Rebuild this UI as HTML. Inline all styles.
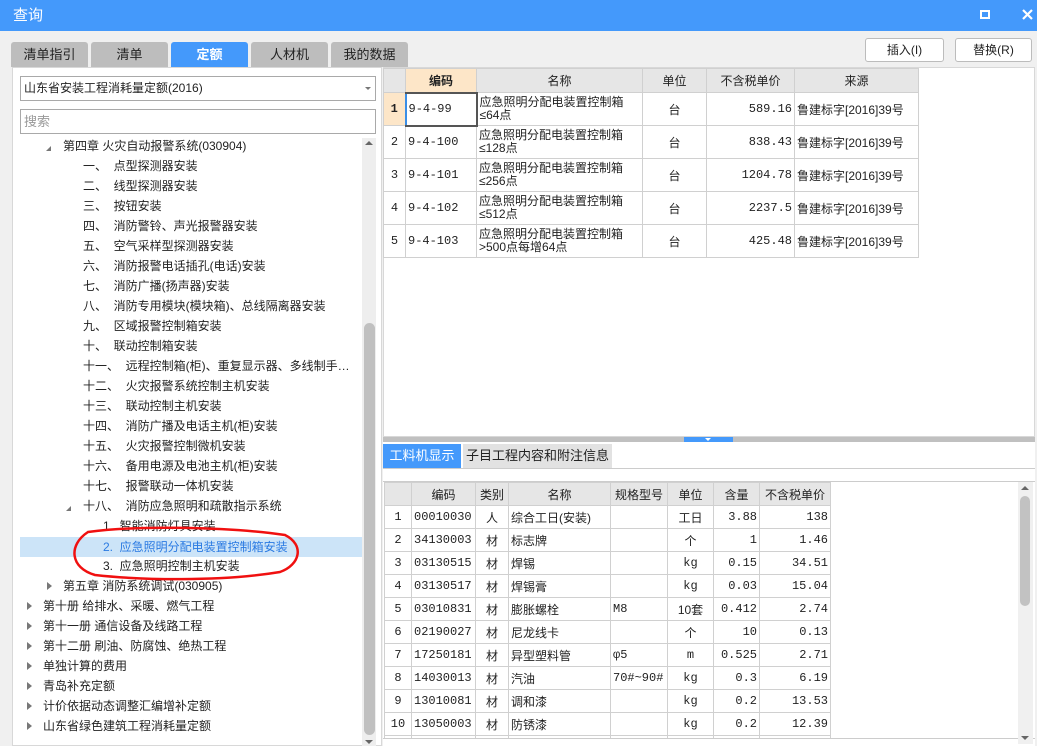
<!DOCTYPE html>
<html style="overflow:hidden;height:746px"><head><meta charset="utf-8"><style>
*{box-sizing:border-box;margin:0;padding:0}
body{width:1037px;height:746px;overflow:hidden;background:#f0f0f0;font-family:"Liberation Sans","Noto Sans CJK SC",sans-serif;font-size:12px;color:#222;position:relative}
.a{position:absolute}
.title{left:0;top:0;width:1037px;height:31px;background:#4499fb;color:#fff;font-size:15px;line-height:31px;padding-left:13px}
.tab{top:42px;height:25px;background:#bdbdbd;border-radius:3px 3px 0 0;text-align:center;line-height:25px;font-size:13px;color:#222}
.tab.on{background:#4499fb;color:#fff;font-weight:bold}
.btn{top:38px;height:24px;background:#fff;border:1px solid #bcbcbc;border-radius:3px;text-align:center;line-height:22px;font-size:12px}
.tree div{position:absolute;height:20px;line-height:20px;white-space:pre;font-size:12px}
.tree div.tri{height:0;width:0;line-height:0}
.tr{border-top:4px solid transparent;border-bottom:4px solid transparent;border-left:5px solid #777}
.td{border-left:5px solid transparent;border-bottom:5px solid #777}
table{border-collapse:collapse;position:absolute;table-layout:fixed}
td{border:1px solid #d0d0d0;font-size:12px;padding:0 2px;overflow:hidden;white-space:nowrap;font-family:"Liberation Mono","Noto Sans CJK SC",monospace}
.h td{background:#e6e6e6;text-align:center;font-family:"Liberation Sans","Noto Sans CJK SC",sans-serif}
.r{text-align:right}.c{text-align:center}
.cn{font-family:"Liberation Sans","Noto Sans CJK SC",sans-serif}
</style></head><body>
<div class="a title">查询</div>
<div class="a" style="left:980px;top:10px;width:10px;height:9px;border:2px solid #fff"></div>
<svg class="a" style="left:1022px;top:9px" width="11" height="11"><path d="M1 1L10 10M10 1L1 10" stroke="#fff" stroke-width="2.2"/></svg>

<div class="a tab" style="left:11px;width:77px">清单指引</div>
<div class="a tab" style="left:91px;width:77px">清单</div>
<div class="a tab on" style="left:171px;width:77px">定额</div>
<div class="a tab" style="left:251px;width:77px">人材机</div>
<div class="a tab" style="left:331px;width:77px">我的数据</div>
<div class="a btn" style="left:865px;width:79px">插入(I)</div>
<div class="a btn" style="left:955px;width:77px">替换(R)</div>

<!-- left panel -->
<div class="a" style="left:12px;top:67px;width:370px;height:679px;background:#fff;border:1px solid #d8d8d8"></div>
<div class="a" style="left:20px;top:76px;width:356px;height:25px;border:1px solid #a9a9a9;background:#fff;line-height:23px;padding-left:3px;font-size:12px">山东省安装工程消耗量定额(2016)</div>
<div class="a" style="left:365px;top:87px;border-left:3px solid transparent;border-right:3px solid transparent;border-top:3px solid #777"></div>
<div class="a" style="left:20px;top:109px;width:356px;height:25px;border:1px solid #a9a9a9;background:#fff;line-height:23px;padding-left:3px;color:#999;font-size:13px">搜索</div>
<div class="a" style="left:362px;top:138px;width:14px;height:608px;background:#eee"></div>
<div class="a" style="left:364px;top:323px;width:11px;height:412px;background:#c0c0c0;border-radius:6px"></div>
<div class="a" style="left:365px;top:141px;border-left:4px solid transparent;border-right:4px solid transparent;border-bottom:4px solid #666"></div>
<div class="a" style="left:365px;top:740px;border-left:4px solid transparent;border-right:4px solid transparent;border-top:4px solid #666"></div>
<div class="a" style="left:20px;top:537px;width:342px;height:20px;background:#cce4f8"></div>

<div class="tree">
<div class="tri td" style="left:46px;top:146px"></div>
<div style="left:63px;top:136px">第四章 火灾自动报警系统(030904)</div>
<div style="left:83px;top:156px">一、  点型探测器安装</div>
<div style="left:83px;top:176px">二、  线型探测器安装</div>
<div style="left:83px;top:196px">三、  按钮安装</div>
<div style="left:83px;top:216px">四、  消防警铃、声光报警器安装</div>
<div style="left:83px;top:236px">五、  空气采样型探测器安装</div>
<div style="left:83px;top:256px">六、  消防报警电话插孔(电话)安装</div>
<div style="left:83px;top:276px">七、  消防广播(扬声器)安装</div>
<div style="left:83px;top:296px">八、  消防专用模块(模块箱)、总线隔离器安装</div>
<div style="left:83px;top:316px">九、  区域报警控制箱安装</div>
<div style="left:83px;top:336px">十、  联动控制箱安装</div>
<div style="left:83px;top:356px">十一、  远程控制箱(柜)、重复显示器、多线制手…</div>
<div style="left:83px;top:376px">十二、  火灾报警系统控制主机安装</div>
<div style="left:83px;top:396px">十三、  联动控制主机安装</div>
<div style="left:83px;top:416px">十四、  消防广播及电话主机(柜)安装</div>
<div style="left:83px;top:436px">十五、  火灾报警控制微机安装</div>
<div style="left:83px;top:456px">十六、  备用电源及电池主机(柜)安装</div>
<div style="left:83px;top:476px">十七、  报警联动一体机安装</div>
<div class="tri td" style="left:66px;top:506px"></div>
<div style="left:83px;top:496px">十八、  消防应急照明和疏散指示系统</div>
<div style="left:103px;top:516px">1.  智能消防灯具安装</div>
<div style="left:103px;top:537px;color:#2a7ae2">2.  应急照明分配电装置控制箱安装</div>
<div style="left:103px;top:556px">3.  应急照明控制主机安装</div>
<div class="tri tr" style="left:47px;top:582px"></div>
<div style="left:63px;top:576px">第五章 消防系统调试(030905)</div>
<div class="tri tr" style="left:27px;top:602px"></div><div style="left:43px;top:596px">第十册 给排水、采暖、燃气工程</div>
<div class="tri tr" style="left:27px;top:622px"></div><div style="left:43px;top:616px">第十一册 通信设备及线路工程</div>
<div class="tri tr" style="left:27px;top:642px"></div><div style="left:43px;top:636px">第十二册 刷油、防腐蚀、绝热工程</div>
<div class="tri tr" style="left:27px;top:662px"></div><div style="left:43px;top:656px">单独计算的费用</div>
<div class="tri tr" style="left:27px;top:682px"></div><div style="left:43px;top:676px">青岛补充定额</div>
<div class="tri tr" style="left:27px;top:702px"></div><div style="left:43px;top:696px">计价依据动态调整汇编增补定额</div>
<div class="tri tr" style="left:27px;top:722px"></div><div style="left:43px;top:716px">山东省绿色建筑工程消耗量定额</div>
</div>
<svg class="a" style="left:0;top:0" width="380" height="746"><path d="M88 532 C140 525 230 527 285 535 C305 545 300 565 280 572 C220 582 140 580 95 575 C70 568 68 545 88 532 Z" fill="none" stroke="#f01010" stroke-width="2.5"/></svg>

<!-- right top -->
<div class="a" style="left:383px;top:67px;width:652px;height:370px;background:#fff;border:1px solid #d8d8d8"></div>
<table style="left:383px;top:68px;width:535px">
<colgroup><col style="width:22px"><col style="width:71px"><col style="width:166px"><col style="width:64px"><col style="width:88px"><col style="width:124px"></colgroup>
<tr class="h" style="height:24px"><td></td><td style="background:#fde6c8;font-weight:bold">编码</td><td>名称</td><td>单位</td><td>不含税单价</td><td>来源</td></tr>
<tr style="height:33px"><td class="c" style="background:#fde6c8;font-weight:bold">1</td><td style="border:2px solid #555;border-left-color:#3a8ee6">9-4-99</td><td class="cn" style="line-height:13px">应急照明分配电装置控制箱<br>≤64点</td><td class="c cn">台</td><td class="r">589.16</td><td class="cn">鲁建标字[2016]39号</td></tr>
<tr style="height:33px"><td class="c">2</td><td>9-4-100</td><td class="cn" style="line-height:13px">应急照明分配电装置控制箱<br>≤128点</td><td class="c cn">台</td><td class="r">838.43</td><td class="cn">鲁建标字[2016]39号</td></tr>
<tr style="height:33px"><td class="c">3</td><td>9-4-101</td><td class="cn" style="line-height:13px">应急照明分配电装置控制箱<br>≤256点</td><td class="c cn">台</td><td class="r">1204.78</td><td class="cn">鲁建标字[2016]39号</td></tr>
<tr style="height:33px"><td class="c">4</td><td>9-4-102</td><td class="cn" style="line-height:13px">应急照明分配电装置控制箱<br>≤512点</td><td class="c cn">台</td><td class="r">2237.5</td><td class="cn">鲁建标字[2016]39号</td></tr>
<tr style="height:33px"><td class="c">5</td><td>9-4-103</td><td class="cn" style="line-height:13px">应急照明分配电装置控制箱<br>&gt;500点每增64点</td><td class="c cn">台</td><td class="r">425.48</td><td class="cn">鲁建标字[2016]39号</td></tr>
</table>

<!-- splitter -->
<div class="a" style="left:383px;top:437px;width:652px;height:5px;background:#c0c0c0"></div>
<div class="a" style="left:684px;top:437px;width:49px;height:5px;background:#4499fb"></div>
<div class="a" style="left:705px;top:438px;border-left:3px solid transparent;border-right:3px solid transparent;border-top:3px solid #fff"></div>

<!-- bottom -->
<div class="a" style="left:383px;top:442px;width:652px;height:304px;background:#fff"></div>
<div class="a" style="left:383px;top:444px;width:78px;height:24px;background:#4499fb;color:#fff;text-align:center;line-height:24px;font-size:13px">工料机显示</div>
<div class="a" style="left:463px;top:444px;width:149px;height:24px;background:#e2e2e2;text-align:center;line-height:24px;font-size:13px">子目工程内容和附注信息</div>
<div class="a" style="left:383px;top:468px;width:652px;height:1px;background:#ccc"></div>
<div class="a" style="left:383px;top:481px;width:652px;height:1px;background:#ccc"></div>
<div class="a" style="left:384px;top:482px;width:634px;height:256px;overflow:hidden">
<table style="left:0;top:0;width:446px">
<colgroup><col style="width:27px"><col style="width:64px"><col style="width:33px"><col style="width:102px"><col style="width:57px"><col style="width:46px"><col style="width:46px"><col style="width:71px"></colgroup>
<tr class="h" style="height:23px"><td></td><td>编码</td><td>类别</td><td>名称</td><td>规格型号</td><td>单位</td><td>含量</td><td>不含税单价</td></tr>
<tr style="height:23px"><td class="c">1</td><td>00010030</td><td class="c cn">人</td><td class="cn">综合工日(安装)</td><td></td><td class="c cn">工日</td><td class="r">3.88</td><td class="r">138</td></tr>
<tr style="height:23px"><td class="c">2</td><td>34130003</td><td class="c cn">材</td><td class="cn">标志牌</td><td></td><td class="c cn">个</td><td class="r">1</td><td class="r">1.46</td></tr>
<tr style="height:23px"><td class="c">3</td><td>03130515</td><td class="c cn">材</td><td class="cn">焊锡</td><td></td><td class="c">kg</td><td class="r">0.15</td><td class="r">34.51</td></tr>
<tr style="height:23px"><td class="c">4</td><td>03130517</td><td class="c cn">材</td><td class="cn">焊锡膏</td><td></td><td class="c">kg</td><td class="r">0.03</td><td class="r">15.04</td></tr>
<tr style="height:23px"><td class="c">5</td><td>03010831</td><td class="c cn">材</td><td class="cn">膨胀螺栓</td><td>M8</td><td class="c cn">10套</td><td class="r">0.412</td><td class="r">2.74</td></tr>
<tr style="height:23px"><td class="c">6</td><td>02190027</td><td class="c cn">材</td><td class="cn">尼龙线卡</td><td></td><td class="c cn">个</td><td class="r">10</td><td class="r">0.13</td></tr>
<tr style="height:23px"><td class="c">7</td><td>17250181</td><td class="c cn">材</td><td class="cn">异型塑料管</td><td>φ5</td><td class="c">m</td><td class="r">0.525</td><td class="r">2.71</td></tr>
<tr style="height:23px"><td class="c">8</td><td>14030013</td><td class="c cn">材</td><td class="cn">汽油</td><td>70#~90#</td><td class="c">kg</td><td class="r">0.3</td><td class="r">6.19</td></tr>
<tr style="height:23px"><td class="c">9</td><td>13010081</td><td class="c cn">材</td><td class="cn">调和漆</td><td></td><td class="c">kg</td><td class="r">0.2</td><td class="r">13.53</td></tr>
<tr style="height:23px"><td class="c">10</td><td>13050003</td><td class="c cn">材</td><td class="cn">防锈漆</td><td></td><td class="c">kg</td><td class="r">0.2</td><td class="r">12.39</td></tr>
<tr style="height:23px"><td class="c">11</td><td>03130103</td><td class="c cn">材</td><td class="cn">镀锌铁丝</td><td></td><td class="c">kg</td><td class="r">0.047</td><td class="r">12.00</td></tr>
</table>
</div>
<div class="a" style="left:383px;top:738px;width:652px;height:8px;background:#fff;border-top:1px solid #ccc"></div>
<div class="a" style="left:1018px;top:482px;width:15px;height:262px;background:#f0f0f0"></div>
<div class="a" style="left:1020px;top:496px;width:10px;height:110px;background:#c2c2c2;border-radius:5px"></div>
<div class="a" style="left:1021px;top:486px;border-left:4px solid transparent;border-right:4px solid transparent;border-bottom:4px solid #666"></div>
<div class="a" style="left:1021px;top:736px;border-left:4px solid transparent;border-right:4px solid transparent;border-top:4px solid #666"></div>
</body></html>
